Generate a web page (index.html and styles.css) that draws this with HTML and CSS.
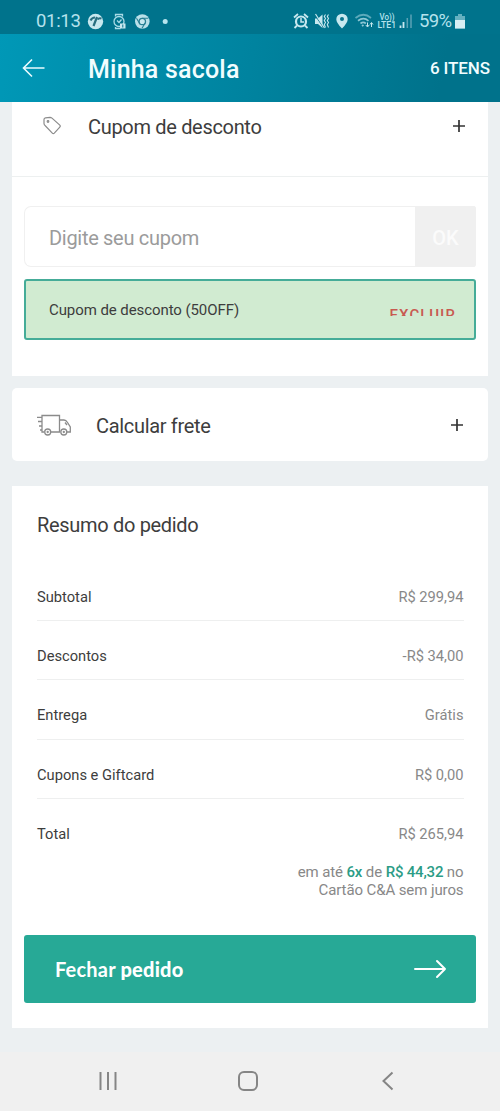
FILE: index.html
```html
<!DOCTYPE html>
<html lang="pt-BR">
<head>
<meta charset="utf-8">
<meta name="viewport" content="width=device-width">
<title>Minha sacola</title>
<link rel="stylesheet" href="styles.css">
</head>
<body>
<div class="status">
  <span class="clock">01:13</span>
  <svg class="status-left" width="90" height="20" viewBox="84 10 90 20">
    <circle cx="95.500" cy="20.500" r="7.700" fill="#c7e8ef"/>
    <path d="M90.500 19.500q1.500-3 4.500-3M97 16l-3.500 9" fill="none" stroke="#286f80" stroke-width="2.200"/>
    <path d="M97.500 18.500q1.500-2 4-1" fill="none" stroke="#286f80" stroke-width="2"/>
    <g fill="none" stroke="#a9dbe6" stroke-width="1.300">
      <circle cx="119" cy="20.500" r="5"/>
      <path d="M115.500 15.500v-2h7v2M115.500 26v1.500h5M117 19.500l2 2 2.500-3"/>
    </g>
    <path d="M120 22.500h5.500v5H120z" fill="#c7e8ef"/>
    <path d="M122.800 23.500v3" stroke="#08738c"/>
    <circle cx="142.300" cy="20.500" r="7.300" fill="#b9e0e9"/>
    <circle cx="142.300" cy="20.500" r="3.200" fill="#c7e8ef" stroke="#287f93" stroke-width="1.300"/>
    <path d="M142.300 17.200h6M139.500 22.200l-3-5M145 22.200l-3 5" stroke="#287f93" stroke-width="1.100"/>
    <circle cx="165.200" cy="20.500" r="2.500" fill="#b7e4ee"/>
  </svg>
  <svg class="status-right" width="122" height="20" viewBox="292 10 122 20">
    <circle cx="301" cy="20.500" r="5" fill="none" stroke="#c7e8ef" stroke-width="2.200"/>
    <path d="M294 16.500l4-3.500M304 13l4 3.500M297 24.500l-2.500 2.500M305 24.500l2.500 2.500" stroke="#c7e8ef" stroke-width="1.800"/>
    <path d="M301 17v4h3" fill="none" stroke="#c7e8ef" stroke-width="1.500"/>
    <path d="M315 17.500h3l4.500-4v13.500l-4.500-4h-3z" fill="#c7e8ef"/>
    <path d="M314.500 13.500l9 13" stroke="#08738c" stroke-width="1"/>
    <path d="M315.500 13l9 14" stroke="#c7e8ef" stroke-width="1.200"/>
    <path d="M325.500 13.500l-1.200 2 1.200 2-1.200 2 1.200 2-1.200 2 1.200 3M328.500 13.500l-1.200 2 1.200 2-1.200 2 1.200 2-1.200 2 1.200 3" fill="none" stroke="#c7e8ef" stroke-width="1.100"/>
    <path d="M342 27.500q-5.700-5.700-5.700-9.300a5.700 5.500 0 0 1 11.400 0q0 3.600-5.700 9.300z" fill="#c7e8ef"/>
    <circle cx="342" cy="18" r="2" fill="#08738c"/>
    <g fill="none" stroke="#8dc7d4" stroke-width="1.700">
      <path d="M355.500 17q8-6.500 15.500 0" opacity=".65"/>
      <path d="M358 19.800q5.500-4.200 10.500 0M360.500 22.500q2.800-2.200 5.300 0M362 25.200l1.500-1.200"/>
    </g>
    <path d="M367.500 21.500v4m-1.700-1.500 1.700 2 1.700-2M371.500 26v-4m-1.500 1.500 1.500-2 1.500 2" fill="none" stroke="#c7e8ef"/>
    <text class="volte" x="379.500" y="19" textLength="15" lengthAdjust="spacingAndGlyphs">Vo))</text>
    <text class="volte" x="377.500" y="27.200" textLength="18.500" lengthAdjust="spacingAndGlyphs">LTE1</text>
    <path d="M400.500 27v-2.500M403.500 27v-6" stroke="#c7e8ef" stroke-width="1.800"/>
    <path d="M407.300 27v-10M411 27V13.500" stroke="#5ba3b5" stroke-width="1.500"/>
  </svg>
  <span class="percent">59%</span>
  <svg width="10" height="16" viewBox="0 0 10 16"><path d="M3 1h4v2h3v12.500H0V3h3z" fill="#64b0c0"/><path d="M0 7h10v8.500H0z" fill="#d7eef3"/></svg>
</div>
<header class="header">
  <svg width="24" height="20" viewBox="0 0 24 20" fill="none" stroke="#e9fbff" stroke-width="1.600"><path d="M22.500 10H2M10 1.500 1.500 10l8.500 8.500"/></svg>
  <h1>Minha sacola</h1>
  <span class="count">6 ITENS</span>
</header>
<main class="content">
  <section class="card coupon">
    <div class="coupon-head">
      <svg width="20" height="20" viewBox="0 0 20 20" fill="none" stroke="#8b8b8b" stroke-width="1.200"><path d="M2 3.500Q2 2 3.500 1.800l4.500-.5q1 0 2 .8l7.800 7q1 1 0 2l-5.500 6q-1 1-2 0l-7-7.300Q2 9 2 7.500z"/><circle cx="6" cy="5.500" r=".8"/></svg>
      <h2>Cupom de desconto</h2>
      <svg class="plus" width="14" height="14" viewBox="0 0 14 14"><path d="M7 1v12M1 7h12"/></svg>
    </div>
    <div class="coupon-body">
      <div class="field"><span class="placeholder">Digite seu cupom</span><button class="ok">OK</button></div>
      <div class="applied"><span>Cupom de desconto (50OFF)</span><span class="remove"><span>EXCLUIR</span></span></div>
    </div>
  </section>
  <section class="card shipping">
    <svg width="36" height="22" viewBox="0 0 36 22" fill="none" stroke="#8b8b8b" stroke-width="1.300"><path d="M8 18H6V1.500h17.500V18H15M23.500 6H28q2 0 3.500 2.500l2.800 4.500v5H31M23.500 18H24M1 3.300h5M2 7.500h4M3 12h3M4 16h2M31 11l-2-2.500"/><circle cx="11.700" cy="18" r="3"/><circle cx="27.800" cy="18" r="3"/><circle cx="11.700" cy="18" r=".5"/><circle cx="27.800" cy="18" r=".5"/></svg>
    <h2>Calcular frete</h2>
    <svg class="plus" width="14" height="14" viewBox="0 0 14 14"><path d="M7 1v12M1 7h12"/></svg>
  </section>
  <section class="card summary">
    <h2>Resumo do pedido</h2>
    <dl class="rows">
      <div class="row"><dt>Subtotal</dt><dd>R$ 299,94</dd></div>
      <div class="row"><dt>Descontos</dt><dd>-R$ 34,00</dd></div>
      <div class="row"><dt>Entrega</dt><dd>Grátis</dd></div>
      <div class="row"><dt>Cupons e Giftcard</dt><dd>R$ 0,00</dd></div>
      <div class="row"><dt>Total</dt><dd>R$ 265,94</dd></div>
    </dl>
    <p class="installments">em até <b>6x</b> de <b>R$ 44,32</b> no<br>Cartão C&amp;A sem juros</p>
    <button class="checkout"><span>Fechar <b>pedido</b></span>
      <svg width="34" height="20" viewBox="0 0 34 20" fill="none" stroke="#fff" stroke-width="2" stroke-linecap="round" stroke-linejoin="round"><path d="M2 10h30M24 2l8 8-8 8"/></svg>
    </button>
  </section>
</main>
<nav class="navbar">
  <svg width="20" height="20" viewBox="0 0 20 20"><path d="M2.500 1v18M10 1v18M17.500 1v18"/></svg>
  <svg width="20" height="20" viewBox="0 0 20 20"><rect x="1" y="1" width="18" height="18" rx="5"/></svg>
  <svg width="20" height="20" viewBox="0 0 20 20"><path d="M14.500 1.500 5.500 10l9 8.500"/></svg>
</nav>
</body>
</html>
```
FILE: styles.css
```css
* { box-sizing: border-box; }
body {
  margin: 0;
  width: 500px;
  height: 1111px;
  display: flex;
  flex-direction: column;
  background: #ecf0f2;
  color: #3d3d3d;
  font-family: Roboto, "Liberation Sans", sans-serif;
  overflow: hidden;
}
h1, h2, p, dl, dd { margin: 0; }
svg { display: block; flex: none; }
button { border: 0; padding: 0; font: inherit; }

.status {
  flex: none;
  height: 34px;
  display: flex;
  align-items: center;
  padding: 7px 0 0 36px;
  background: #00738c;
  color: #b5e2ec;
}
.clock { width: 48px; font-size: 18.500px; letter-spacing: -.3px; }
.status-right { margin-left: 118px; }
.percent { width: 37px; margin-left: 5px; margin-right: -1px; font-size: 18.500px; letter-spacing: -.7px; }
.volte { font-size: 9px; font-weight: 500; fill: #b5e2ec; }

.header {
  flex: none;
  height: 68px;
  display: flex;
  align-items: center;
  padding: 0 10px 0 22px;
  background: linear-gradient(100deg, #0098b7 0%, #00839f 50%, #00728b 88%);
  color: #f1fdff;
}
.header h1 { margin: 2px 0 0 42px; font-size: 25px; font-weight: 500; letter-spacing: .2px; }
.count { margin: 0 0 0 auto; font-size: 17px; font-weight: 500; letter-spacing: -.1px; }

.content { flex: 1; padding: 0 12px; }
.card { background: #fff; }
.card h2 { font-size: 20px; font-weight: 400; line-height: 24px; letter-spacing: -.32px; }
.plus { margin-left: auto; stroke: #333; stroke-width: 1.700; }

.coupon { height: 274px; }
.coupon-head {
  height: 75px;
  display: flex;
  align-items: flex-start;
  padding: 13px 22px 0 30px;
  border-bottom: 1px solid #edf0f0;
}
.coupon-head h2 { margin-left: 26px; }
.coupon-head svg { margin-top: 1px; }
.coupon-head .plus { margin-top: 4px; }
.coupon-body { padding: 29px 12px 0; }
.field {
  height: 61px;
  display: flex;
  align-items: center;
  justify-content: space-between;
  padding: 2px 0 0 24px;
  border: 1px solid #f0f0f0;
  border-right: 0;
  border-radius: 7px 3px 3px 7px;
}
.placeholder { font-size: 20px; letter-spacing: -.3px; color: #9b9b9b; }
.ok { width: 61px; height: 61px; margin-top: -2px; padding-top: 2px; border-radius: 0 3px 3px 0; background: #f0f0f0; color: #fbfbfb; font-size: 20px; font-weight: 500; }
.applied {
  height: 61px;
  margin-top: 12px;
  display: flex;
  align-items: center;
  justify-content: space-between;
  padding: 0 18px 0 23px;
  border: 2px solid #45ac98;
  border-radius: 3px;
  background: #d1ebd1;
  font-size: 15px;
  letter-spacing: -.08px;
}
/* The label is taller than its box, so its lower part is clipped */
.remove { height: 9px; overflow: hidden; margin-top: 3px; color: #c85a51; font-weight: 500; line-height: 16px; letter-spacing: 1.100px; }
.remove span { display: block; }

.shipping {
  height: 73px;
  margin-top: 12px;
  display: flex;
  align-items: center;
  padding: 0 24px;
  border-radius: 5px;
}
.shipping h2 { margin: 2px 0 0 24px; }

.summary { height: 542px; margin-top: 25px; padding: 27px 12px 0; }
.summary h2 { padding-left: 13px; }
.rows { padding: 25px 12.500px 0 13px; }
.row {
  display: flex;
  justify-content: space-between;
  height: 59.200px;
  padding-top: 26px;
  border-bottom: 1px solid #eeefef;
  font-size: 14.700px;
  line-height: 18px;
}
.row:last-child { border: 0; }
.row dd { color: #888; }
.installments { padding: 6.500px 12.500px 0 0; text-align: right; color: #888; font-size: 15px; line-height: 17.500px; letter-spacing: -.1px; }
.installments b { color: #2b9c86; font-weight: 500; letter-spacing: -.2px; }
.checkout {
  width: 100%;
  height: 68px;
  margin-top: 36px;
  display: flex;
  align-items: center;
  justify-content: space-between;
  padding: 0 29px 0 31px;
  border-radius: 3px;
  background: #27a996;
  color: #fff;
  font-family: Lato, sans-serif;
  font-size: 20px;
  font-weight: 700;
  letter-spacing: .2px;
}
.checkout b { font-weight: 900; }

.navbar {
  flex: none;
  height: 59px;
  display: flex;
  align-items: center;
  justify-content: space-between;
  padding: 0 102px 0 98px;
  background: #f0f0f0;
}
.navbar svg { fill: none; stroke: #858585; stroke-width: 2; margin-top: -1px; }
```
